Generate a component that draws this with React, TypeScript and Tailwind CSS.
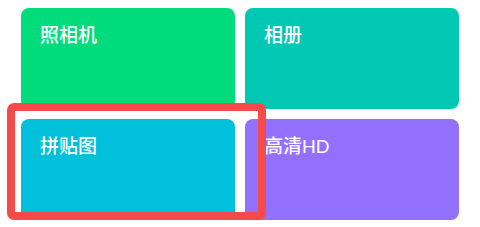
import React from 'react';

const tiles = [
  { label: '照相机', color: 'bg-[#00db7c]' },
  { label: '相册', color: 'bg-[#00c8b3]' },
  { label: '拼贴图', color: 'bg-[#00c0da]' },
  { label: '高清HD', color: 'bg-[#9470ff]' },
];

const App: React.FC = () => {
  return (
    <div className="relative w-[480px] h-[227px] bg-white font-['Liberation_Sans','Noto_Sans_CJK_SC',sans-serif]">
      <div className="grid grid-cols-[214px_214px] gap-x-[10px] gap-y-[10px] pl-[21px] pt-[8px]">
        {tiles.map((t) => (
          <div key={t.label} className={`${t.color} h-[101px] rounded-[8px] px-[19px] pt-[14px]`}>
            <span className="text-white text-[19px] font-medium leading-[28px]">{t.label}</span>
          </div>
        ))}
      </div>
      {/* highlight box */}
      <div className="absolute left-[7px] top-[103px] w-[259px] h-[117px] border-[8px] border-[#f44a4a] rounded-[7px]" />
    </div>
  );
};

export default App;
